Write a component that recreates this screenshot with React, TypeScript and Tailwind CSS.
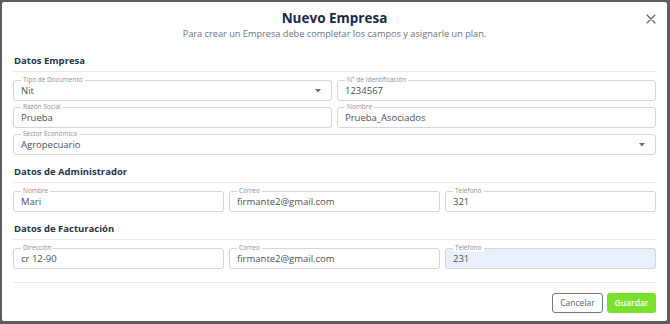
import React from "react";

const font = { fontFamily: '"Open Sans", "Noto Sans", sans-serif' };

function Field({
  label,
  value,
  select,
  filled,
}: {
  label: string;
  value: string;
  select?: boolean;
  filled?: boolean;
}) {
  return (
    <div
      className={`relative h-[21px] rounded-[3px] border border-[#d4d6da] flex items-center pl-[7px] pr-[10px] ${
        filled ? "bg-[#e8f0fe]" : "bg-white"
      }`}
    >
      <span className="absolute -top-[5px] left-[7px] bg-white px-[2px] text-[6.5px] leading-[8px] text-[#8a8f98]">
        {label}
      </span>
      <span className="flex-1 text-[9.5px] leading-[12px] text-[#4b4f56] pt-[1px]">{value}</span>
      {select && (
        <svg width="6" height="4" viewBox="0 0 6 4" className="mt-[1px]">
          <path d="M0 0 L6 0 L3 3.5 Z" fill="#6b6f76" />
        </svg>
      )}
    </div>
  );
}

function SectionTitle({ children }: { children: React.ReactNode }) {
  return (
    <div className="h-[18px] border-b border-[#e9eaec] pl-[1px]">
      <span className="block text-[9.5px] leading-[14px] font-bold text-[#2a3148]">{children}</span>
    </div>
  );
}

export default function App() {
  return (
    <div className="w-[670px] h-[324px] bg-[#5e5e5e] pt-[2px] pl-[2px] pr-[3px] pb-[3px]" style={font}>
      <div className="w-full h-full bg-white rounded-[2px] pl-[11px] pr-[11px] flex flex-col relative">
        <div className="absolute right-[11px] top-[12px]">
          <svg width="10" height="10" viewBox="0 0 10 10">
            <path d="M1 1 L9 9 M9 1 L1 9" stroke="#5b5f66" strokeWidth="1.1" strokeLinecap="round" />
          </svg>
        </div>
        <div className="h-[52px] pt-[8px] flex flex-col items-center">
          <div className="text-[13.5px] leading-[17px] font-bold text-[#1c2746]">Nuevo Empresa</div>
          <div className="text-[9.2px] leading-[12px] text-[#6e737b] mt-[1px]">
            Para crear un Empresa debe completar los campos y asignarle un plan.
          </div>
        </div>
        <SectionTitle>Datos Empresa</SectionTitle>
        <div className="mt-[8px] flex flex-col gap-[6px]">
          <div className="grid grid-cols-2 gap-[5px]">
            <Field label="Tipo de Documento" value="Nit" select />
            <Field label="N° de Identificación" value="1234567" />
          </div>
          <div className="grid grid-cols-2 gap-[5px]">
            <Field label="Razón Social" value="Prueba" />
            <Field label="Nombre" value="Prueba_Asociados" />
          </div>
          <Field label="Sector Económico" value="Agropecuario" select />
        </div>
        <div className="mt-[10px]">
          <SectionTitle>Datos de Administrador</SectionTitle>
        </div>
        <div className="mt-[8px] grid grid-cols-3 gap-[5px]">
          <Field label="Nombre" value="Mari" />
          <Field label="Correo" value="firmante2@gmail.com" />
          <Field label="Teléfono" value="321" />
        </div>
        <div className="mt-[10px]">
          <SectionTitle>Datos de Facturación</SectionTitle>
        </div>
        <div className="mt-[8px] grid grid-cols-3 gap-[5px]">
          <Field label="Dirección" value="cr 12-90" />
          <Field label="Correo" value="firmante2@gmail.com" />
          <Field label="Teléfono" value="231" filled />
        </div>
        <div className="mt-[13px] border-t border-[#e9eaec]" />
        <div className="mt-[10px] flex justify-end gap-[4px]">
          <button className="h-[20px] w-[51px] rounded-[3px] border border-[#6f7787] bg-white text-[8.5px] text-[#5a606b]">
            Cancelar
          </button>
          <button className="h-[20px] w-[49px] rounded-[3px] bg-[#7ae02e] text-[8.5px] font-semibold text-white">
            Guardar
          </button>
        </div>
      </div>
    </div>
  );
}
